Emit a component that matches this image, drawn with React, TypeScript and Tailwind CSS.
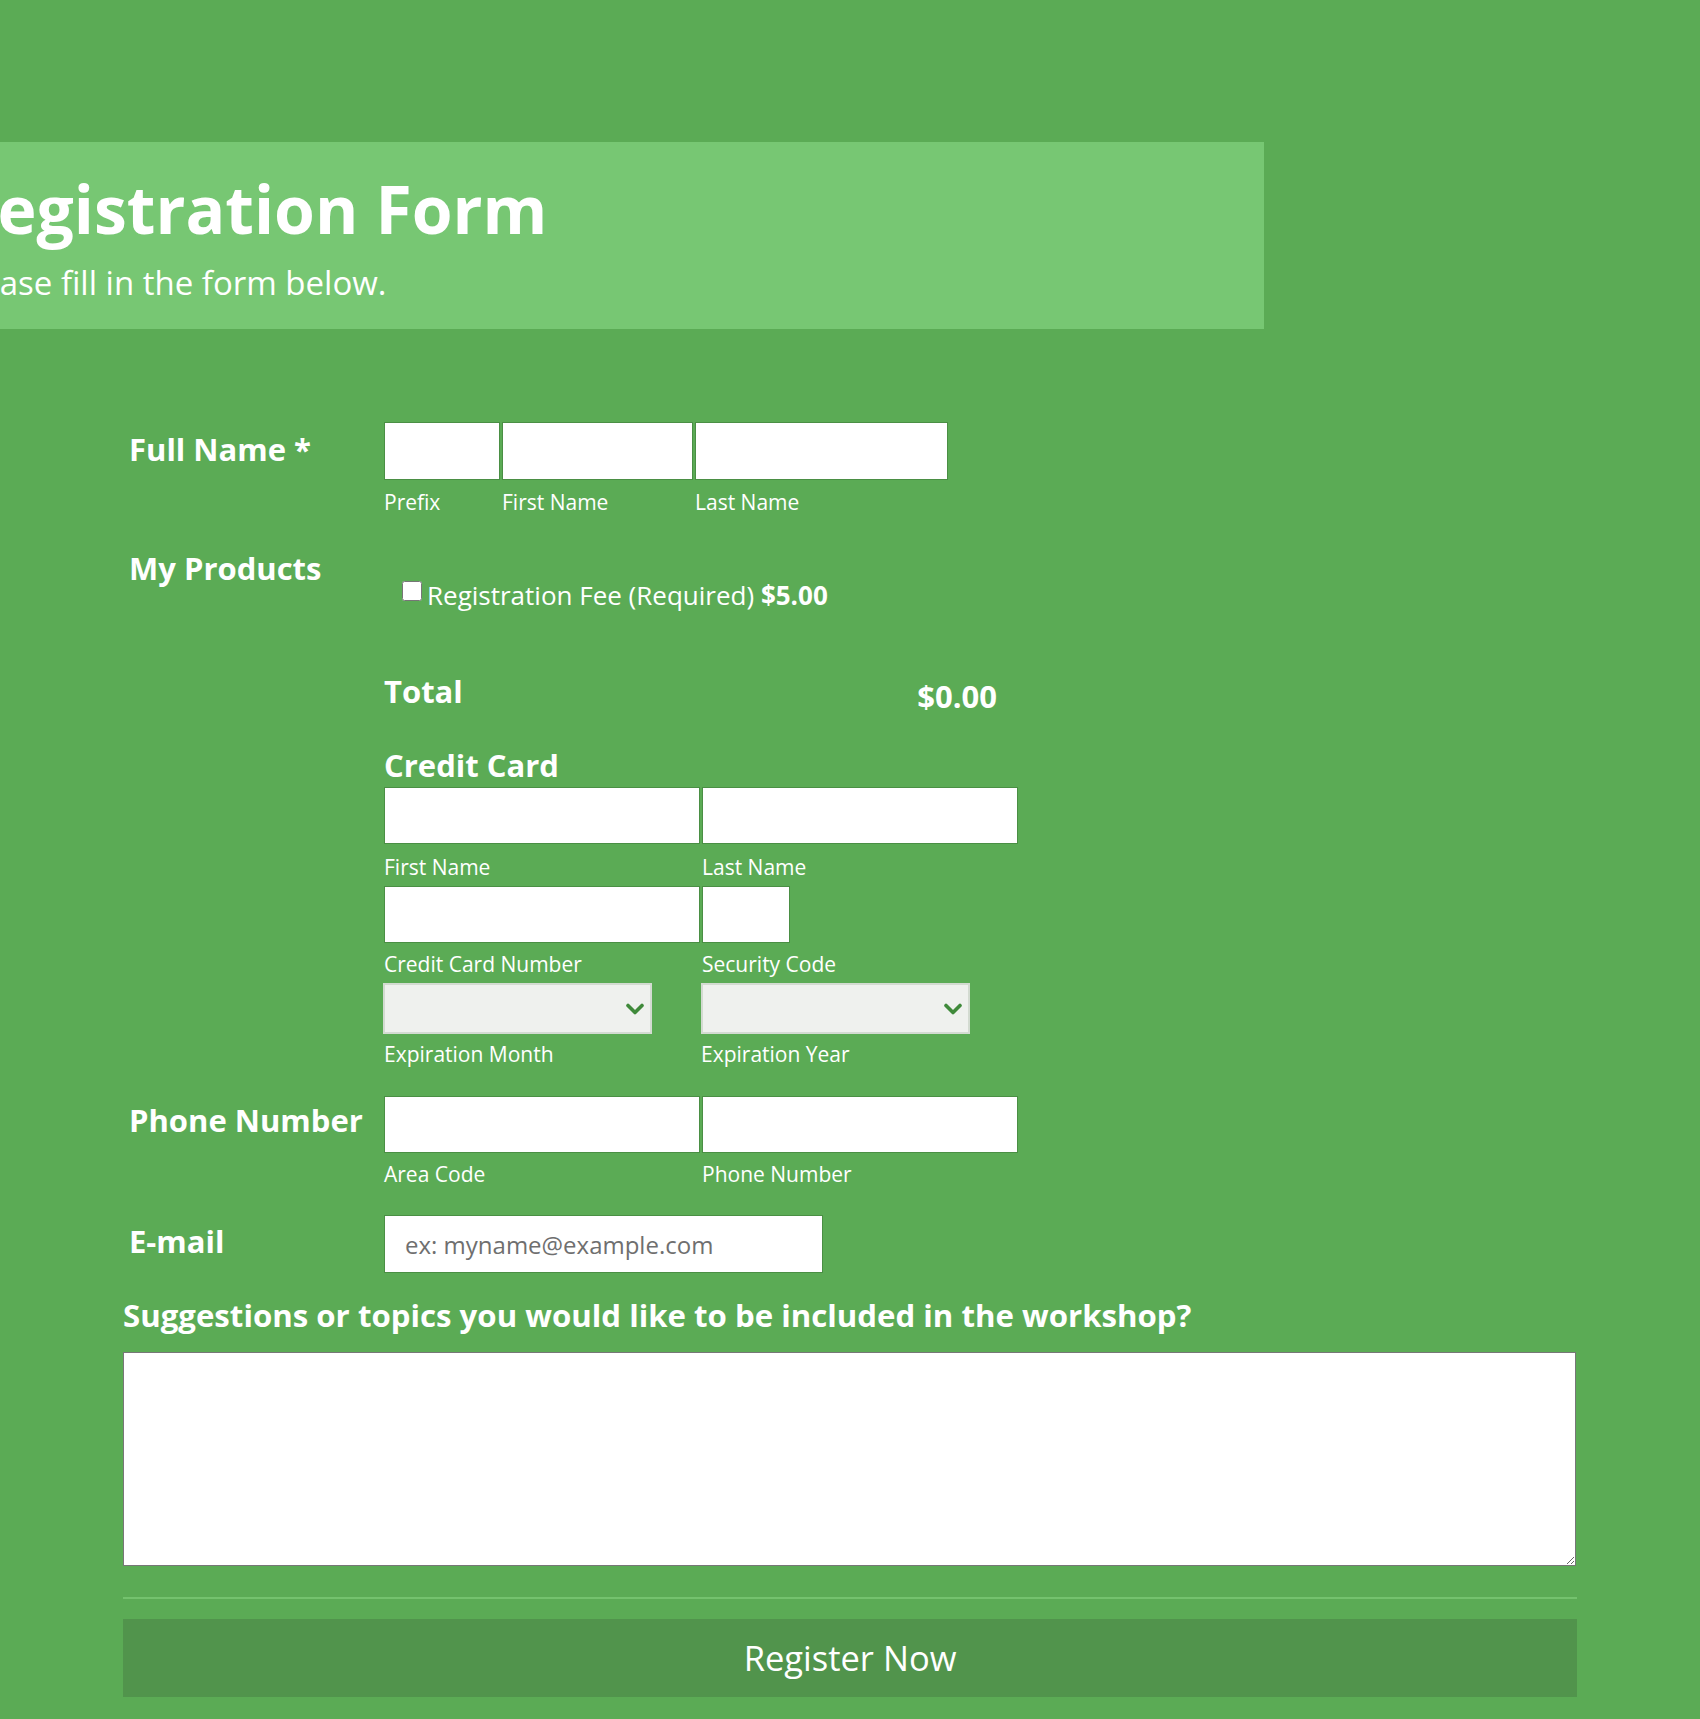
import React from "react";

function Sub({ children, className = "" }: { children: React.ReactNode; className?: string }) {
  return <div className={"text-[21px] leading-[21px] text-white whitespace-nowrap " + className}>{children}</div>;
}

function Field({ w, h = 57 }: { w: string; h?: number }) {
  return (
    <input
      type="text"
      className={
        w +
        " " +
        (h === 58 ? "h-[58px]" : "h-[57px]") +
        " bg-white border border-[#4a8f44] outline-none"
      }
    />
  );
}

function Chevron() {
  return (
    <svg width="18" height="12" viewBox="0 0 18 12" className="absolute right-[6px] top-[18px]">
      <polyline points="2,2.5 9,9.5 16,2.5" fill="none" stroke="#3f8a3a" strokeWidth="3.6" strokeLinecap="round" strokeLinejoin="round" />
    </svg>
  );
}

export default function App() {
  return (
    <div className="w-[1700px] h-[1719px] overflow-hidden bg-[#5bab55] text-white font-['Open_Sans',sans-serif]">
      <div className="pt-[142px]">
        <header className="w-[1264px] h-[187px] bg-[#77c773] pt-[33px] overflow-hidden">
          <div className="-ml-[46px]">
            <h1 className="text-[66px] leading-[66px] font-bold whitespace-nowrap">Registration Form</h1>
            <p className="mt-[25px] -ml-[1px] text-[33px] leading-[33px] whitespace-nowrap">Please fill in the form below.</p>
          </div>
        </header>
      </div>

      <form className="pl-[123px] w-[1577px]">
        {/* Full Name */}
        <div className="mt-[93px] flex">
          <div className="w-[261px] pl-[6px] pt-[12px] text-[31px] leading-[31px] font-bold">Full Name *</div>
          <div className="flex gap-[2px]">
            <div className="flex flex-col">
              <Field w="w-[116px]" h={58} />
              <Sub className="mt-[12px]">Prefix</Sub>
            </div>
            <div className="flex flex-col">
              <Field w="w-[191px]" h={58} />
              <Sub className="mt-[12px]">First Name</Sub>
            </div>
            <div className="flex flex-col">
              <Field w="w-[253px]" h={58} />
              <Sub className="mt-[12px]">Last Name</Sub>
            </div>
          </div>
        </div>

        {/* My Products */}
        <div className="mt-[40px] flex">
          <div className="w-[261px] pl-[6px] text-[31px] leading-[31px] font-bold">My Products</div>
          <div className="flex flex-col w-[613px]">
            <div className="mt-[28px] pl-[18px] flex items-start">
              <input type="checkbox" className="w-[20px] h-[20px] m-0" />
              <span className="ml-[5px] mt-[1px] text-[26px] leading-[26px] whitespace-nowrap">
                Registration Fee (Required) <b className="font-bold">$5.00</b>
              </span>
            </div>

            <div className="mt-[68px] flex justify-between items-start">
              <div className="text-[31px] leading-[31px] font-bold">Total</div>
              <div className="mt-[5px] text-[31px] leading-[31px] font-bold">$0.00</div>
            </div>

            <div className="mt-[38px] text-[31px] leading-[31px] font-bold">Credit Card</div>

            <div className="mt-[6px] flex gap-[2px]">
              <div className="flex flex-col">
                <Field w="w-[316px]" />
                <Sub className="mt-[13px]">First Name</Sub>
              </div>
              <div className="flex flex-col">
                <Field w="w-[316px]" />
                <Sub className="mt-[13px]">Last Name</Sub>
              </div>
            </div>

            <div className="mt-[8px] flex gap-[2px]">
              <div className="flex flex-col">
                <Field w="w-[316px]" />
                <Sub className="mt-[11px]">Credit Card Number</Sub>
              </div>
              <div className="flex flex-col">
                <Field w="w-[88px]" />
                <Sub className="mt-[11px]">Security Code</Sub>
              </div>
            </div>

            <div className="mt-[8px] flex">
              <div className="flex flex-col w-[318px] -ml-[1px]">
                <div className="relative w-[269px] h-[51px] bg-[#eff1ee] border-2 border-[#d3dbd1]">
                  <Chevron />
                </div>
                <Sub className="mt-[10px] ml-[1px]">Expiration Month</Sub>
              </div>
              <div className="flex flex-col">
                <div className="relative w-[269px] h-[51px] bg-[#eff1ee] border-2 border-[#d3dbd1]">
                  <Chevron />
                </div>
                <Sub className="mt-[10px]">Expiration Year</Sub>
              </div>
            </div>
          </div>
        </div>

        {/* Phone */}
        <div className="mt-[31px] flex">
          <div className="w-[261px] pl-[6px] pt-[9px] text-[31px] leading-[31px] font-bold whitespace-nowrap">Phone Number</div>
          <div className="flex gap-[2px]">
            <div className="flex flex-col">
              <Field w="w-[316px]" />
              <Sub className="mt-[11px]">Area Code</Sub>
            </div>
            <div className="flex flex-col">
              <Field w="w-[316px]" />
              <Sub className="mt-[11px]">Phone Number</Sub>
            </div>
          </div>
        </div>

        {/* Email */}
        <div className="mt-[30px] flex">
          <div className="w-[261px] pl-[6px] pt-[11px] text-[31px] leading-[31px] font-bold">E-mail</div>
          <input
            type="text"
            placeholder="ex: myname@example.com"
            className="w-[439px] h-[58px] bg-white border border-[#4a8f44] pl-[20px] text-[24px] text-[#333] placeholder:text-[#6f6f6f] outline-none"
          />
        </div>

        {/* Suggestions */}
        <div className="mt-[27px] text-[31.2px] leading-[31px] font-bold whitespace-nowrap">
          Suggestions or topics you would like to be included in the workshop?
        </div>
        <textarea className="mt-[21px] block w-[1453px] h-[214px] bg-white border border-[#777] outline-none" />

        <div className="mt-[31px] w-[1454px] h-[2px] bg-[#74c26e]" />

        <button
          type="button"
          className="mt-[20px] w-[1454px] h-[78px] bg-[#51944c] text-white text-[34.5px] leading-[34px]"
        >
          Register Now
        </button>
      </form>
    </div>
  );
}
